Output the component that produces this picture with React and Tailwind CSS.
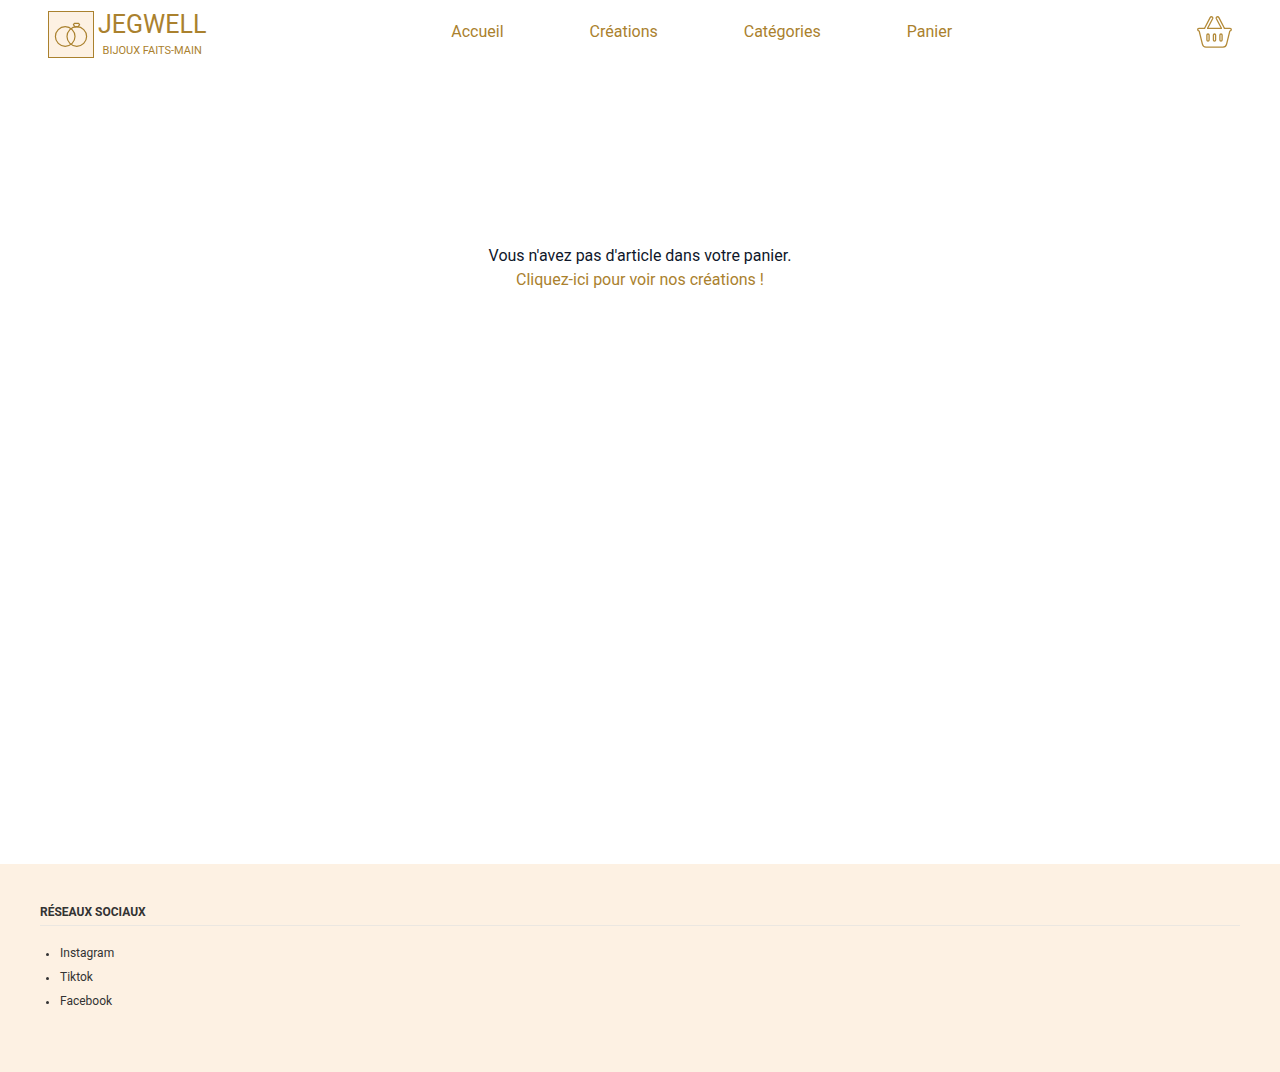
const NAV_LINKS = ["Accueil", "Créations", "Catégories", "Panier"];
const SOCIAL_LINKS = ["Instagram", "Tiktok", "Facebook"];

function RingsLogo() {
  return (
    <svg viewBox="0 0 46 47" className="h-[47px] w-[46px]" fill="none" stroke="#aa812e" aria-hidden="true">
      <rect x="0.5" y="0.5" width="45" height="46" fill="#fdf1e3" />
      <circle cx="17.2" cy="25.5" r="9.8" strokeWidth="1.2" />
      <circle cx="28.8" cy="25.5" r="9.8" strokeWidth="1.2" />
      <path d="M26.4 12.4h4.2l1 1.3-1.6 2.1h-3l-1.6-2.1z" strokeWidth="1.2" strokeLinejoin="round" />
    </svg>
  );
}

function BasketIcon() {
  return (
    <svg viewBox="0 0 35 32" className="h-8 w-[35px]" fill="none" stroke="#b38a38" strokeWidth="1.3" strokeLinejoin="round" strokeLinecap="round" aria-hidden="true">
      <path d="M7.6 12.3 13.1 1.6Q13.8.4 15 .9Q16.2 1.5 15.6 2.8L10.6 12.3" />
      <path d="M27.4 12.3 21.9 1.6Q21.2.4 20 .9Q18.8 1.5 19.4 2.8L24.4 12.3" />
      <path d="M7.6 12.3H2Q.7 12.3.7 13.6Q.7 14.9 2.2 15.2L5.4 28.2Q6.1 31.2 9 31.2H26Q28.9 31.2 29.6 28.2L32.8 15.2Q34.3 14.9 34.3 13.6Q34.3 12.3 33 12.3H27.4M10.6 12.3H24.4" />
      <rect x="9.9" y="18" width="2.2" height="7.2" rx="1.1" />
      <rect x="16.4" y="18" width="2.2" height="7.2" rx="1.1" />
      <rect x="22.9" y="18" width="2.2" height="7.2" rx="1.1" />
    </svg>
  );
}

export default function App() {
  return (
    <div className="flex min-h-screen flex-col bg-white font-[Roboto,sans-serif] text-base text-[#0f172a]">
      <header className="flex h-16 items-center justify-between px-12 text-[#aa812e]">
        <a href="#accueil" className="flex items-center gap-1 pt-1">
          <RingsLogo />
          <span className="flex flex-col items-center">
            <span className="text-[25px] leading-[34px]">JEGWELL</span>
            <span className="text-[11px] leading-[18px]">BIJOUX FAITS-MAIN</span>
          </span>
        </a>
        <nav className="flex gap-[86px]">
          {NAV_LINKS.map((label) => (
            <a key={label} href="#">{label}</a>
          ))}
        </nav>
        <button type="button" aria-label="Panier">
          <BasketIcon />
        </button>
      </header>
      <main className="flex-1 pt-45 text-center">
        <p>Vous n'avez pas d'article dans votre panier.</p>
        <a href="#creations" className="text-[#aa812e]">Cliquez-ici pour voir nos créations !</a>
      </main>
      <footer className="bg-[#fdf1e3] px-10 pt-9 pb-[59px] text-xs leading-6 text-[#333333]">
        <h2 className="border-b border-[#ebe7e1] pb-px font-bold">RÉSEAUX SOCIAUX</h2>
        <ul className="list-disc pt-[15px] pl-[18px] marker:text-[9px]">
          {SOCIAL_LINKS.map((label) => (
            <li key={label} className="pl-0.5">
              <a href="#">{label}</a>
            </li>
          ))}
        </ul>
      </footer>
    </div>
  );
}
